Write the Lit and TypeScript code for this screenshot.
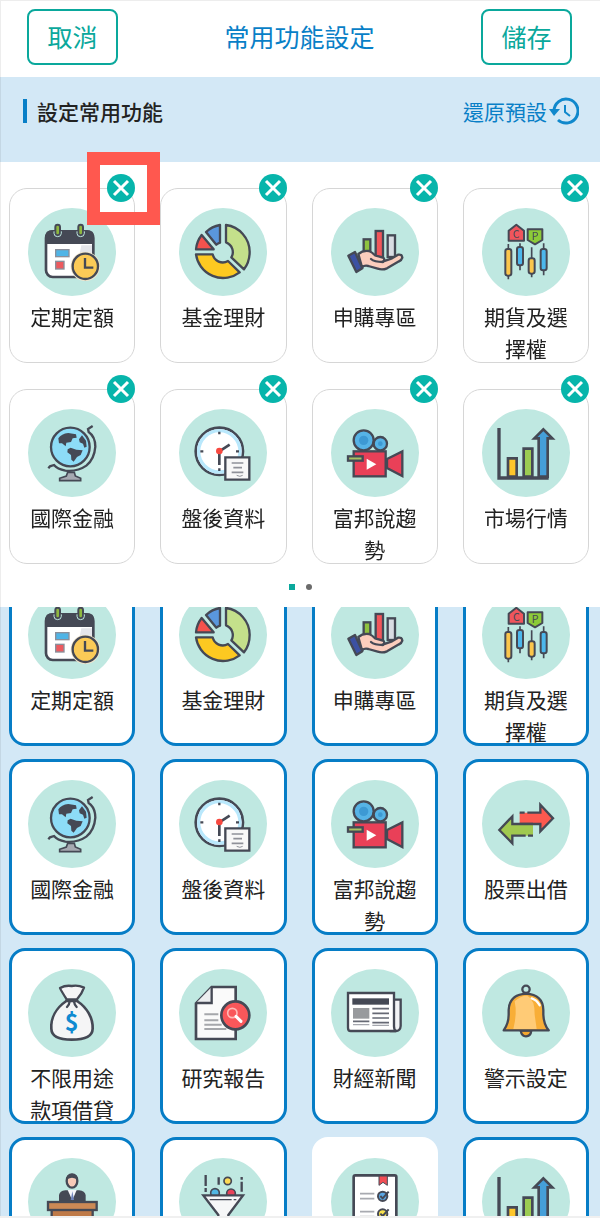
import { LitElement, html, css, svg, nothing } from "lit";
import { customElement, property, query } from "lit/decorators.js";

const INK = "#454955";

const icons: Record<string, unknown> = {
  calendar: svg`
    <rect x="54" y="70" width="142" height="137" rx="20" fill="#fff" stroke=${INK} stroke-width="8"/>
    <path d="M160 112h32v40h-40z" fill="#e4e5ea"/>
    <path d="M52 108V86q0-19 19-19h108q19 0 19 19v22z" fill=${INK}/>
    <g fill="#8fb83f" stroke=${INK} stroke-width="6"><rect x="82" y="50" width="14" height="32" rx="7"/><rect x="151" y="50" width="14" height="32" rx="7"/></g>
    <g fill="none" stroke="#bfe8e1" stroke-width="3"><path d="M78 70v6q0 10 11 10t11-10v-6M147 70v6q0 10 11 10t11-10v-6"/></g>
    <rect x="83" y="125" width="40" height="21" fill="#4fb4e6" stroke="#8a8f9b" stroke-width="4"/>
    <rect x="83" y="160" width="25" height="23" fill="#ec5a5f" stroke="#8a8f9b" stroke-width="4"/>
    <circle cx="172" cy="175" r="44" fill="#f1e6cd"/>
    <circle cx="172" cy="175" r="38" fill="#fbca57" stroke=${INK} stroke-width="7"/>
    <path d="M171 150v29h25" fill="none" stroke=${INK} stroke-width="7"/>`,
  pie: svg`
    <g stroke=${INK} stroke-width="7" stroke-linejoin="round">
      <path d="M141 51A82 82 0 0 1 212 131Q212 162 195 184L157 148A31 31 0 0 0 141 103Z" fill="#c4e08b"/>
      <path d="M51 139H101A31 31 0 0 0 147 159L182 193A82 82 0 0 1 51 139Z" fill="#fdc921"/>
      <path d="M51 124H104L68 81Q53 100 51 124Z" fill="#f4524d"/>
      <path d="M123 51V104Q117 106 112 110L81 72Q99 55 123 51Z" fill="#5a97dd"/>
    </g>`,
  hand: svg`
    <g stroke=${INK} stroke-width="7">
      <rect x="98" y="94" width="20" height="48" fill="#8fc23f"/>
      <rect x="134" y="69" width="22" height="78" fill="#f2565a"/>
      <rect x="170" y="82" width="22" height="65" fill="#d9dce3"/>
      <path d="M82 138Q96 126 114 129Q124 133 132 142Q146 146 158 150Q163 158 155 161L183 151L201 140Q213 138 214 149Q212 156 204 160L168 181Q154 187 140 182L112 174Q100 171 93 178Z" fill="#fbcdbd" stroke-linejoin="round"/>
      <path d="M120 153q10 9 36 9" fill="none" stroke-linecap="round"/>
      <path d="M52 143L72 132L94 181L76 192Z" fill="#3c51a3" stroke-linejoin="round"/>
    </g>`,
  options: svg`
    <g stroke=${INK} stroke-width="6" stroke-linejoin="round">
      <path d="M80 68L103 50L126 68V98H80Z" fill="#f0555c"/>
      <path d="M137 64H181V96L159 109L137 96Z" fill="#8ccb38"/>
      <path d="M79 108V214M114 106V187M149 118V208M185 106V202" fill="none" stroke-width="5"/>
      <rect x="70" y="123" width="18" height="80" rx="7" fill="#fbc64c"/>
      <rect x="105" y="117" width="18" height="55" rx="7" fill="#4cb7ec"/>
      <rect x="140" y="151" width="18" height="46" rx="7" fill="#fbc64c"/>
      <rect x="176" y="123" width="18" height="64" rx="7" fill="#4cb7ec"/>
    </g>
    <g font-size="32" text-anchor="middle" fill=${INK}><text x="103" y="91">C</text><text x="159" y="95">P</text></g>`,
  globe: svg`
    <circle cx="127" cy="114" r="58" fill="#8ddcf7" stroke=${INK} stroke-width="7"/>
    <path d="M91 88Q100 74 121 72L144 76L146 86L134 88L129 99L115 101L113 112L102 103L93 103ZM119 121L128 116L145 122L164 124L158 138L147 144L137 158L130 152L129 138L118 130ZM153 91L162 79L174 95L176 113L169 116L165 104L155 100Z" fill=${INK}/>
    <path d="M194 51L180 60L182 69Q202 83 202 113Q199 151 175 170Q148 189 112 185Q88 180 78 168L66 172L61 178" fill="none" stroke=${INK} stroke-width="7"/>
    <path d="M119 190H139L142 201L158 208V215H95V208L115 201Z" fill="#a6a9b1" stroke=${INK} stroke-width="5"/>`,
  clock: svg`
    <circle cx="121" cy="127" r="71" fill="#fff" stroke=${INK} stroke-width="8"/>
    <circle cx="121" cy="127" r="62" fill="none" stroke="#b9e8fc" stroke-width="10"/>
    <path d="M121 68v8M121 178v8M64 127h9M171 127h9" stroke=${INK} stroke-width="7"/>
    <path d="M121 127V168M121 127L152 107" stroke=${INK} stroke-width="8" fill="none"/>
    <circle cx="121" cy="126" r="10" fill="#f7483f"/>
    <path d="M139 145H211V212H139Z" fill="#f8f8f8" stroke=${INK} stroke-width="7"/>
    <path d="M158 162h35M163 176h26M158 190h35" stroke="#8f9199" stroke-width="5"/>
    <path d="M173 199q10 6 18 0" fill="none" stroke="#8f9199" stroke-width="3"/>`,
  camera: svg`
    <g stroke=${INK} stroke-width="7">
      <circle cx="98" cy="94" r="30" fill="#56b3e6"/><circle cx="148" cy="104" r="20" fill="#56b3e6"/>
      <rect x="68" y="127" width="96" height="75" fill="#e94058"/>
      <path d="M168 150L214 127V201L168 177Z" fill="#e94058"/>
      <rect x="51" y="142" width="44" height="13" fill="#a7c365"/>
    </g>
    <circle cx="98" cy="94" r="14" fill="#3d99d3"/><circle cx="148" cy="104" r="7" fill="#3d99d3"/>
    <path d="M107 149L136 166L107 182Z" fill="#fff"/>`,
  market: svg`
    <g stroke=${INK} stroke-width="8">
      <path d="M78 203V148H104V203Z" fill="#fdc62b"/>
      <path d="M125 203V119H151V203Z" fill="#9ccc52"/>
      <path d="M170 203V88H157L184 61L211 88H197V203Z" fill="#459fd9"/>
      <path d="M51 57V207H200" fill="none" stroke-width="10"/>
    </g>`,
  arrows: svg`
    <g stroke=${INK} stroke-width="7">
      <path d="M113 98H175V73L213 115L175 154V130H113Z" fill="#fd594f" stroke="none"/>
      <path d="M136 98H175V74L213 115L175 154V132H113M113 98H128" fill="none"/>
      <path d="M153 132H91V109L52 150L91 190V167H153Z" fill="#a0c94f" stroke="none"/>
      <path d="M153 132H91V109L52 150L91 190V167H131M138 167H153" fill="none"/>
    </g>`,
  bag: svg`
    <path d="M115 96C84 117 68 148 70 179Q71 212 131 212Q193 212 194 179C195 148 178 116 147 96Z" fill="#f5f5f6" stroke=${INK} stroke-width="8"/>
    <path d="M116 91Q98 63 96 57Q113 48 131 51Q150 47 168 56Q162 74 147 91Z" fill="#f5f5f6" stroke=${INK} stroke-width="7" stroke-linejoin="round"/>
    <path d="M115 95H148M125 97Q124 107 117 114M138 97Q139 107 146 114" fill="none" stroke=${INK} stroke-width="7" stroke-linecap="round"/>
    <text x="131" y="185" font-size="70" font-weight="700" text-anchor="middle" fill="#0f8ad1">$</text>`,
  report: svg`
    <path d="M51 103L98 54H170V210H51Z" fill="#fafafa" stroke=${INK} stroke-width="8"/>
    <path d="M51 102H98V54" fill="#eceef0" stroke=${INK} stroke-width="7"/>
    <path d="M76 136h42M76 154h42M76 180h66M76 167h52" stroke="#a5a7ab" stroke-width="6"/>
    <circle cx="169" cy="139" r="42" fill="#f9575a" stroke=${INK} stroke-width="8"/>
    <circle cx="160" cy="132" r="14" fill="none" stroke="#ffb9b6" stroke-width="5"/>
    <path d="M171 142L186 157" stroke="#fff" stroke-width="9" stroke-linecap="round"/>`,
  news: svg`
    <path d="M186 92H209V171Q208 186 194 186H180Z" fill="#f2f3f5" stroke=${INK} stroke-width="7"/>
    <path d="M51 72H189V172Q189 184 196 186H59Q51 186 51 176Z" fill="#fff" stroke=${INK} stroke-width="7"/>
    <rect x="64" y="88" width="110" height="19" fill=${INK}/>
    <rect x="66" y="117" width="49" height="32" fill="#989a9d"/>
    <path d="M124 119h50M124 133h50M124 147h50M124 161h50M66 157h49" stroke="#666974" stroke-width="5"/>
    <path d="M66 167h49M124 169h50" stroke="#a5a7ae" stroke-width="4"/>`,
  bell: svg`
    <circle cx="132" cy="61" r="11" fill="none" stroke=${INK} stroke-width="7"/>
    <path d="M116 185Q119 202 132 202Q146 202 148 185Z" fill="#f4a72e" stroke=${INK} stroke-width="7"/>
    <path d="M65 184Q80 163 80 137V123Q82 77 132 74Q183 77 184 123V137Q185 165 200 184Z" fill="#f8ae37" stroke=${INK} stroke-width="7" stroke-linejoin="round"/>
    <path d="M94 180Q106 134 98 97Q116 79 136 80Q159 92 158 137L164 180Z" fill="#ffcb76"/>
    <path d="M149 88Q165 93 173 109" fill="none" stroke="#fff" stroke-width="7" stroke-linecap="round"/>`,
  podium: svg`
    <path d="M93 132V111Q95 99 112 97H153Q171 99 173 111V132Z" fill=${INK}/>
    <path d="M119 96L133 127L146 96Z" fill="#f5f6fa"/>
    <path d="M133 100L128 126H138Z" fill="#6e83bb"/>
    <ellipse cx="132" cy="69" rx="16" ry="20" fill="#f7c9b7" stroke=${INK} stroke-width="7"/>
    <path d="M114 66Q114 48 132 47Q151 48 150 66Q142 60 132 59Q122 60 114 66Z" fill=${INK}/>
    <rect x="71" y="155" width="123" height="80" fill="#bf7a48" stroke=${INK} stroke-width="7"/>
    <rect x="60" y="132" width="146" height="24" fill="#cc8955" stroke=${INK} stroke-width="7"/>`,
  funnel: svg`
    <path d="M80 51V84M80 90V102M119 58V80M188 57V65M188 71V101" stroke=${INK} stroke-width="7"/>
    <circle cx="146" cy="69" r="11" fill="#fdda55" stroke=${INK} stroke-width="5"/>
    <circle cx="108" cy="105" r="13" fill="#51b7e3" stroke=${INK} stroke-width="5"/>
    <circle cx="156" cy="106" r="13" fill="#e94259" stroke=${INK} stroke-width="5"/>
    <path d="M73 112H192L148 171V218L118 205V171Z" fill="#f6f7f8" stroke=${INK} stroke-width="7"/>
    <path d="M92 125H158M164 125H172" stroke=${INK} stroke-width="4"/>`,
  checklist: svg`
    <rect x="68" y="52" width="128" height="174" rx="5" fill="#fff" stroke=${INK} stroke-width="8"/>
    <path d="M144 54H169V82L156 73L144 82Z" fill="#f14f55" stroke=${INK} stroke-width="3"/>
    <path d="M87 107h43M87 122h43M87 161h43M87 176h43" stroke="#a8aab0" stroke-width="5"/>
    <circle cx="155" cy="115" r="14" fill="#5aa7e5" stroke=${INK} stroke-width="6"/>
    <circle cx="155" cy="168" r="14" fill="#f8e14d" stroke=${INK} stroke-width="6"/>
    <path d="M148 114L155 121L173 101M148 167L155 174L173 154" fill="none" stroke=${INK} stroke-width="6"/>`,
};

interface Feature {
  icon: string;
  label?: string;
  idle?: boolean;
}

const favourites: Feature[] = [
  { icon: "calendar", label: "定期定額" },
  { icon: "pie", label: "基金理財" },
  { icon: "hand", label: "申購專區" },
  { icon: "options", label: "期貨及選擇權" },
  { icon: "globe", label: "國際金融" },
  { icon: "clock", label: "盤後資料" },
  { icon: "camera", label: "富邦說趨勢" },
  { icon: "market", label: "市場行情" },
];

const catalogue: Feature[] = [
  ...favourites.slice(0, 7),
  { icon: "arrows", label: "股票出借" },
  { icon: "bag", label: "不限用途款項借貸" },
  { icon: "report", label: "研究報告" },
  { icon: "news", label: "財經新聞" },
  { icon: "bell", label: "警示設定" },
  { icon: "podium" },
  { icon: "funnel" },
  { icon: "checklist", idle: true },
  { icon: "market" },
];

@customElement("feature-face")
class FeatureFace extends LitElement {
  @property() icon = "";
  @property() label = "";

  static styles = css`
    :host {
      display: flex;
      flex-direction: column;
      align-items: center;
      gap: 4px;
    }
    .disc {
      display: block;
      width: 88px;
      height: 88px;
      border-radius: 50%;
      background: #bfe8e1;
    }
    .label {
      width: 88px;
      text-align: center;
      font-size: 21px;
      line-height: 32px;
    }
  `;

  render() {
    return html`
      <svg class="disc" viewBox="0 0 264 264" aria-hidden="true">${icons[this.icon]}</svg>
      ${this.label ? html`<span class="label">${this.label}</span>` : nothing}
    `;
  }
}

@customElement("app-root")
class AppRoot extends LitElement {
  @query(".catalogue") catalogueEl!: HTMLElement;

  static styles = css`
    :host {
      display: flex;
      flex-direction: column;
      height: 100vh;
      position: relative;
      box-sizing: border-box;
      border-bottom: 2px solid #f0f0f0;
      background: #fff;
      color: #222;
      font-family: "Noto Sans CJK TC", "Noto Sans", sans-serif;
    }
    :host::before {
      content: "";
      position: absolute;
      inset: 0;
      border-left: 1px solid rgba(0, 0, 0, 0.07);
      border-top: 1px solid rgba(0, 0, 0, 0.07);
      pointer-events: none;
    }
    * {
      box-sizing: border-box;
    }
    button {
      font: inherit;
      color: inherit;
      margin: 0;
      padding: 0;
      cursor: pointer;
    }
    .bar {
      display: flex;
      align-items: center;
      justify-content: space-between;
      height: 77px;
      padding: 0 28px 4px 27px;
    }
    .title {
      margin: 0;
      padding-bottom: 2px;
      font-size: 25px;
      font-weight: 400;
      color: #087fc7;
    }
    .action {
      width: 91px;
      height: 56px;
      padding-bottom: 2px;
      border: 2px solid #0aa89c;
      border-radius: 8px;
      background: #fff;
      color: #0aa89c;
      font-size: 25px;
    }
    .band {
      display: flex;
      align-items: flex-start;
      justify-content: space-between;
      height: 85px;
      padding: 18px 21px 0 23px;
      background: #d3e8f6;
    }
    .heading {
      display: flex;
      align-items: center;
      gap: 10px;
      height: 32px;
      margin: 0;
      font-size: 21px;
      font-weight: 500;
    }
    .mark {
      width: 4px;
      height: 24px;
      background: #087fc7;
    }
    .reset {
      display: flex;
      align-items: center;
      gap: 2px;
      height: 32px;
      border: 0;
      background: none;
      color: #087fc7;
      font-size: 21px;
    }
    .grid {
      display: grid;
      grid-template-columns: repeat(4, 1fr);
      column-gap: 25px;
      margin: 0;
      padding: 0 11px 0 9px;
      list-style: none;
    }
    .chosen {
      row-gap: 26px;
      padding-top: 26px;
    }
    .card {
      position: relative;
      height: 175px;
      padding-top: 19px;
      border: 1px solid #d6d6d6;
      border-radius: 18px;
    }
    .remove {
      position: absolute;
      top: -15px;
      right: -1px;
      display: block;
      width: 28px;
      height: 28px;
      border: 0;
      border-radius: 50%;
      background: #07b5ab;
    }
    .cross {
      display: block;
      width: 28px;
      height: 28px;
    }
    .callout {
      position: absolute;
      top: -37px;
      right: -26px;
      width: 73px;
      height: 73px;
      border: 13px solid #ff584f;
      pointer-events: none;
    }
    .pages {
      display: flex;
      justify-content: center;
      gap: 11px;
      height: 43px;
      padding-top: 20px;
    }
    .page {
      width: 6px;
      height: 6px;
      background: #6b6b6b;
      border-radius: 50%;
    }
    .current {
      background: #0aa89c;
      border-radius: 0;
    }
    .catalogue {
      flex: 1;
      min-height: 0;
      overflow-y: auto;
      scrollbar-width: none;
      background: #d3e8f6;
    }
    .all {
      row-gap: 13px;
      padding-top: 13px;
      padding-bottom: 13px;
    }
    .tile {
      display: flex;
      justify-content: center;
      align-items: flex-start;
      width: 100%;
      height: 176px;
      padding-top: 18px;
      border: 3px solid #067dc6;
      border-radius: 16px;
      background: #fff;
    }
    .idle {
      border-color: #fff;
    }
  `;

  firstUpdated() {
    this.catalogueEl.scrollTop = 50;
  }

  render() {
    return html`
      <header class="bar">
        <button class="action">取消</button>
        <h1 class="title">常用功能設定</h1>
        <button class="action">儲存</button>
      </header>
      <div class="band">
        <h2 class="heading"><span class="mark"></span>設定常用功能</h2>
        <button class="reset">
          還原預設
          <svg width="30" height="30" viewBox="0 0 30 30" fill="none" stroke="#1088cc" aria-hidden="true">
            <path d="M5 15A12 12 0 1 1 9 24" stroke-width="3" />
            <path d="M0 13H11L5 20Z" fill="#1088cc" stroke="none" />
            <path d="M16 9V16L21 20" stroke-width="2" />
          </svg>
        </button>
      </div>
      <ul class="grid chosen">
        ${favourites.map(
          (f, i) => html`<li class="card">
            <feature-face icon=${f.icon} label=${f.label ?? ""}></feature-face>
            <button class="remove">
              <svg class="cross" viewBox="0 0 28 28" aria-hidden="true">
                <path d="M7 7L21 21M21 7L7 21" stroke="#fff" stroke-width="3" />
              </svg>
            </button>
            ${i === 0 ? html`<span class="callout"></span>` : nothing}
          </li>`
        )}
      </ul>
      <div class="pages"><span class="page current"></span><span class="page"></span></div>
      <section class="catalogue">
        <ul class="grid all">
          ${catalogue.map(
            (f) => html`<li>
              <button class="tile ${f.idle ? "idle" : ""}">
                <feature-face icon=${f.icon} label=${f.label ?? ""}></feature-face>
              </button>
            </li>`
          )}
        </ul>
      </section>
    `;
  }
}
